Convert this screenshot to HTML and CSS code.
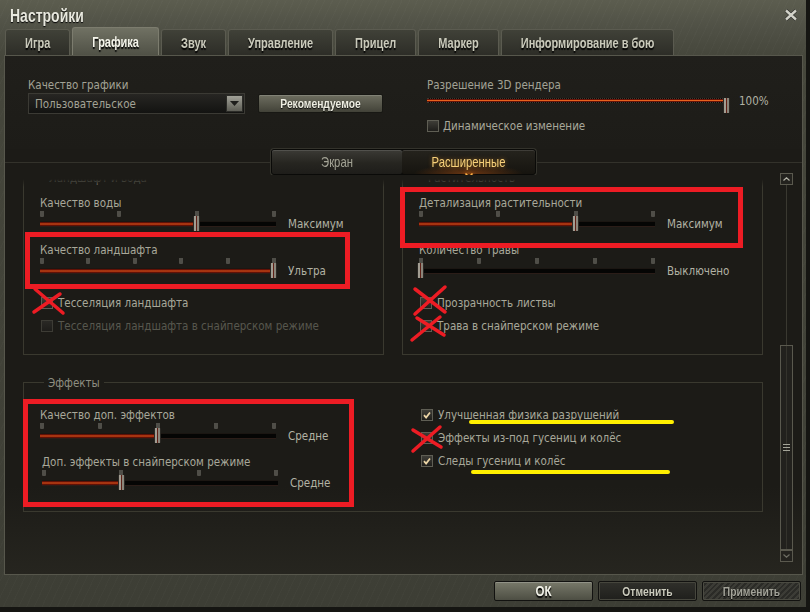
FILE: index.html
```html
<!DOCTYPE html>
<html lang="ru">
<head>
<meta charset="utf-8">
<title>Настройки</title>
<link rel="stylesheet" href="styles.css">
</head>
<body>
<div class="window">
  <div class="titlebar">
    <div class="title"><span class="tall">Настройки</span></div>
    <svg class="close" viewBox="0 0 14 12" width="14" height="12"><path d="M2 1.5L12 10.5M12 1.5L2 10.5" stroke="#202020" stroke-width="3.6"/><path d="M2 1.5L12 10.5M12 1.5L2 10.5" stroke="#d2d2c8" stroke-width="2.4"/></svg>
  </div>

  <div class="tabs">
    <div class="tab"><span class="tall">Игра</span></div>
    <div class="tab active"><span class="tall">Графика</span></div>
    <div class="tab"><span class="tall">Звук</span></div>
    <div class="tab"><span class="tall">Управление</span></div>
    <div class="tab"><span class="tall">Прицел</span></div>
    <div class="tab"><span class="tall">Маркер</span></div>
    <div class="tab"><span class="tall">Информирование в бою</span></div>
  </div>

  <div class="panel">
    <div class="top">
      <div class="top-left">
        <div class="label">Качество графики</div>
        <div class="top-row">
          <div class="select">
            <span>Пользовательское</span>
            <span class="select-btn"><svg width="9" height="5" viewBox="0 0 9 5"><path d="M0 0H9L4.5 5Z" fill="#1e1e1c"/></svg></span>
          </div>
          <div class="btn-rec"><span class="tall">Рекомендуемое</span></div>
        </div>
      </div>
      <div class="top-right">
        <div class="label">Разрешение 3D рендера</div>
        <div class="res-row">
          <div class="res-track">
            <div class="res-rail"><div class="fill" style="width:100%"></div></div>
            <div class="thumb res-thumb" style="left:296px"></div>
          </div>
          <div class="res-value">100%</div>
        </div>
        <div class="check top-check"><span class="cb"></span>Динамическое изменение</div>
      </div>
    </div>

    <div class="subbar">
      <div class="subtabs">
        <div class="subtab"><span class="tall">Экран</span></div>
        <div class="subtab active"><span class="tall">Расширенные</span><svg class="chev" viewBox="0 0 10 7" width="10" height="7"><path d="M1.5 1.5L5 5L8.5 1.5" stroke="#ffb347" stroke-width="1.6" fill="none"/></svg></div>
      </div>
    </div>

    <div class="body">
      <div class="viewport">
        <div class="content">
          <div class="row">
            <div class="group">
              <div class="legend">Ландшафт и вода</div>
              <div class="slider">
                <div class="s-label">Качество воды</div>
                <div class="s-row">
                  <div class="s-wrap">
                    <div class="ticks"><i></i><i></i><i></i><i></i></div>
                    <div class="rail"><div class="fill" style="width:157px"></div></div>
                    <div class="thumb" style="left:153px"></div>
                  </div>
                  <div class="s-value">Максимум</div>
                </div>
              </div>
              <div class="slider">
                <div class="s-label">Качество ландшафта</div>
                <div class="s-row">
                  <div class="s-wrap">
                    <div class="ticks"><i></i><i></i><i></i><i></i><i></i><i></i></div>
                    <div class="rail"><div class="fill" style="width:100%"></div></div>
                    <div class="thumb" style="left:230px"></div>
                  </div>
                  <div class="s-value">Ультра</div>
                </div>
              </div>
              <div class="checks">
                <div class="check"><span class="cb"></span>Тесселяция ландшафта</div>
                <div class="check disabled"><span class="cb"></span>Тесселяция ландшафта в снайперском режиме</div>
              </div>
            </div>

            <div class="group">
              <div class="legend">Растительность</div>
              <div class="slider">
                <div class="s-label">Детализация растительности</div>
                <div class="s-row">
                  <div class="s-wrap">
                    <div class="ticks"><i></i><i></i><i></i><i></i></div>
                    <div class="rail"><div class="fill" style="width:157px"></div></div>
                    <div class="thumb" style="left:153px"></div>
                  </div>
                  <div class="s-value">Максимум</div>
                </div>
              </div>
              <div class="slider">
                <div class="s-label">Количество травы</div>
                <div class="s-row">
                  <div class="s-wrap">
                    <div class="ticks"><i></i><i></i><i></i><i></i><i></i></div>
                    <div class="rail"><div class="fill" style="width:0"></div></div>
                    <div class="thumb" style="left:-2px"></div>
                  </div>
                  <div class="s-value">Выключено</div>
                </div>
              </div>
              <div class="checks">
                <div class="check"><span class="cb"></span>Прозрачность листвы</div>
                <div class="check"><span class="cb"></span>Трава в снайперском режиме</div>
              </div>
            </div>
          </div>

          <div class="group effects">
            <div class="legend">Эффекты</div>
            <div class="col-a">
              <div class="slider">
                <div class="s-label">Качество доп. эффектов</div>
                <div class="s-row">
                  <div class="s-wrap">
                    <div class="ticks"><i></i><i></i><i></i><i></i><i></i></div>
                    <div class="rail"><div class="fill" style="width:118px"></div></div>
                    <div class="thumb" style="left:114px"></div>
                  </div>
                  <div class="s-value">Средне</div>
                </div>
              </div>
              <div class="slider shift">
                <div class="s-label">Доп. эффекты в снайперском режиме</div>
                <div class="s-row">
                  <div class="s-wrap">
                    <div class="ticks"><i></i><i></i><i></i><i></i></div>
                    <div class="rail"><div class="fill" style="width:79px"></div></div>
                    <div class="thumb" style="left:76px"></div>
                  </div>
                  <div class="s-value">Средне</div>
                </div>
              </div>
            </div>
            <div class="col-b">
              <div class="check"><span class="cb on"><svg width="8" height="8" viewBox="0 0 8 8"><path d="M1 4.2L3.1 6.5L7 1.5" fill="none" stroke="#ecd5a6" stroke-width="1.8"/></svg></span>Улучшенная физика разрушений</div>
              <div class="check"><span class="cb"></span>Эффекты из-под гусениц и колёс</div>
              <div class="check"><span class="cb on"><svg width="8" height="8" viewBox="0 0 8 8"><path d="M1 4.2L3.1 6.5L7 1.5" fill="none" stroke="#ecd5a6" stroke-width="1.8"/></svg></span>Следы гусениц и колёс</div>
            </div>
          </div>
        </div>
      </div>

      <div class="scrollbar">
        <div class="sb-btn"><svg width="7" height="4" viewBox="0 0 7 4"><path d="M0.5 3.5L3.5 0.8L6.5 3.5" stroke="#b4b4a8" fill="none" stroke-width="1.2"/></svg></div>
        <div class="sb-track"></div>
        <div class="sb-thumb"><svg width="7" height="7" viewBox="0 0 7 7"><path d="M0 0.5H7M0 3.5H7M0 6.5H7" stroke="#a4a498"/></svg></div>
        <div class="sb-btn"><svg width="7" height="4" viewBox="0 0 7 4"><path d="M0.5 0.5L3.5 3.2L6.5 0.5" stroke="#6e6e64" fill="none" stroke-width="1.2"/></svg></div>
      </div>
    </div>
  </div>

  <div class="footer">
    <div class="btn ok"><span class="tall">ОК</span></div>
    <div class="btn cancel"><span class="tall">Отменить</span></div>
    <div class="btn apply"><span class="tall">Применить</span></div>
  </div>

  <svg class="annot" width="810" height="612" viewBox="0 0 810 612">
    <g fill="none" stroke="#ed1c24" stroke-width="5">
      <rect x="27.5" y="234.5" width="320" height="52"/>
      <rect x="402.5" y="189.5" width="338" height="56"/>
      <rect x="25.5" y="401.5" width="326" height="103"/>
    </g>
    <g stroke="#ed1c24" stroke-width="3.5" stroke-linecap="round">
      <path d="M35 289L63 313M60 294L34 312"/>
      <path d="M415 289L445 312M445 287L415 314"/>
      <path d="M417 318L444 335M440 317L412 340"/>
      <path d="M413 430L441 447M440 427L413 451"/>
    </g>
    <g stroke="#ffef00" stroke-width="4" stroke-linecap="round">
      <path d="M471 422H672"/>
      <path d="M473 472H668"/>
    </g>
  </svg>
</div>
</body>
</html>
```

FILE: styles.css
```css
body {
  margin: 0;
  background: #141411;
  font-family: "DejaVu Sans Condensed", "DejaVu Sans", sans-serif;
  font-size: 11.5px;
  color: #a8a89a;
}

.tall {
  display: inline-block;
  transform: scaleY(1.3);
}

.window {
  position: relative;
  width: 810px;
  height: 612px;
  box-sizing: border-box;
  border-right: 4px solid #151512;
  border-bottom: 5px solid #151512;
  background:
    repeating-linear-gradient(115deg, rgba(255,255,255,0.015) 0 1px, rgba(0,0,0,0) 1px 7px),
    linear-gradient(180deg, #5c5d4f 0, #505146 27px, #46473c 55px, #3d3e35 100%);
  display: flex;
  flex-direction: column;
  overflow: hidden;
}

.titlebar {
  height: 27px;
  box-sizing: border-box;
  padding: 2px 8px 0 10px;
  display: flex;
  align-items: center;
  justify-content: space-between;
  flex: none;
}

.title {
  font-family: "Liberation Sans", Arial, sans-serif;
  font-weight: bold;
  font-size: 14px;
  line-height: 20px;
  color: #e8e8de;
  text-shadow: 0 1px 1px #000;
}

.close { display: block; }

.tabs {
  height: 28px;
  display: flex;
  align-items: flex-end;
  gap: 2px;
  padding-left: 5px;
  flex: none;
}

.tab {
  height: 26px;
  box-sizing: border-box;
  padding: 0 19px;
  display: flex;
  align-items: center;
  justify-content: center;
  font-family: "Liberation Sans", Arial, sans-serif;
  font-weight: bold;
  font-size: 11px;
  color: #cacabb;
  background: linear-gradient(#404138, #2d2d27);
  border: 1px solid #5b5b50;
  border-bottom: none;
  border-radius: 3px 3px 0 0;
  text-shadow: 0 1px 1px #000;
  white-space: nowrap;
}

.tab .tall { transform: scaleY(1.35); }

.tab.active {
  height: 28px;
  color: #f5f5eb;
  background: linear-gradient(#707163, #505146);
  border-color: #7c7c6e;
}

.panel {
  margin-left: 4px;
  width: 799px;
  height: 520px;
  flex: none;
  box-sizing: border-box;
  border: 1px solid #57574c;
  background: #1c1b17;
  display: flex;
  flex-direction: column;
}

.top {
  height: 93px;
  flex: none;
  display: flex;
  background: linear-gradient(#201f1b, #1d1c18);
}

.top-left {
  width: 399px;
  padding: 22px 0 0 23px;
}

.top-right {
  padding-top: 22px;
}

.label {
  height: 14px;
  line-height: 14px;
  white-space: nowrap;
  color: #a2a295;
}

.top-row {
  display: flex;
  margin-top: 1px;
}

.select {
  width: 217px;
  height: 21px;
  box-sizing: border-box;
  border: 1px solid #3b3a34;
  background: linear-gradient(#272623, #131311);
  display: flex;
  align-items: center;
  justify-content: space-between;
  padding-left: 6px;
  color: #a3a396;
}

.select-btn {
  width: 17px;
  height: 17px;
  margin-right: 1px;
  box-sizing: border-box;
  border: 1px solid #2c2c28;
  background: linear-gradient(#a2a298, #5e5e56);
  display: flex;
  align-items: center;
  justify-content: center;
}

.btn-rec {
  margin: 1px 0 0 13px;
  width: 125px;
  height: 19px;
  box-sizing: border-box;
  border: 1px solid #181814;
  border-radius: 2px;
  background: linear-gradient(#6e6e60, #424238);
  box-shadow: inset 0 1px 0 rgba(255,255,255,0.15);
  font-family: "Liberation Sans", Arial, sans-serif;
  font-weight: bold;
  font-size: 10.3px;
  color: #eeeee2;
  text-shadow: 0 1px 1px #000;
  display: flex;
  align-items: center;
  justify-content: center;
}

.btn-rec .tall { transform: scaleY(1.2); }

.res-row {
  display: flex;
  align-items: center;
  height: 16px;
  margin-top: 1px;
}

.res-track {
  position: relative;
  width: 300px;
  height: 16px;
}

.res-rail {
  margin-top: 5px;
  width: 298px;
  height: 3px;
  background: #0a0908;
  border-top: 1px dotted #3a3932;
  border-bottom: 1px dotted #3a3932;
}

.res-thumb {
  top: 1px;
  width: 8px;
  height: 14px;
}

.res-value {
  margin-left: 12px;
  color: #b1b1a3;
}

.check {
  display: flex;
  align-items: center;
  gap: 5px;
  height: 16px;
  line-height: 14px;
  padding-left: 1px;
  white-space: nowrap;
  color: #a8a89a;
}

.top-check {
  margin-top: 9px;
  gap: 4px;
  padding-left: 0;
}

.cb {
  width: 12px;
  height: 12px;
  box-sizing: border-box;
  flex: none;
  border: 1px solid #5f5e54;
  background: linear-gradient(#3e3d37, #1f1e1b);
  display: flex;
  align-items: center;
  justify-content: center;
}

.check.disabled { color: #57574e; }
.check.disabled .cb {
  border-color: #3d3c35;
  background: linear-gradient(#2a2925, #1e1d1a);
}

.subbar {
  height: 26px;
  flex: none;
  display: flex;
  align-items: center;
}

.subbar::before,
.subbar::after {
  content: "";
  flex: 1;
  height: 1px;
  background: #33322b;
}

.subtabs {
  display: flex;
  height: 26px;
  box-sizing: border-box;
  border: 1px solid #0a0a08;
  border-radius: 3px;
  background: #0a0a08;
  box-shadow: 0 0 0 1px #34332c;
}

.subtab {
  width: 130px;
  display: flex;
  align-items: center;
  justify-content: center;
  font-family: "Liberation Sans", Arial, sans-serif;
  font-size: 11.3px;
  color: #a3a395;
  background: linear-gradient(#3b3a35, #262520 55%, #1e1d1a);
  box-shadow: inset 0 1px 0 rgba(255,255,255,0.12);
  border-radius: 2px;
}

.subtab .tall { transform: scaleY(1.22); }

.subtab.active {
  position: relative;
  width: 133px;
  color: #f6d07a;
  background:
    radial-gradient(ellipse 55% 55% at 50% 100%, rgba(210,95,20,0.45), rgba(0,0,0,0) 75%),
    linear-gradient(#25231d, #16140f);
  text-shadow: 0 0 4px rgba(240,150,40,0.6);
}

.chev {
  position: absolute;
  left: 50%;
  bottom: -5px;
  margin-left: -5px;
  filter: drop-shadow(0 0 2px rgba(255,120,20,0.9));
}

.body {
  flex: 1;
  min-height: 0;
  display: flex;
  background: linear-gradient(#1c1b17 0, #1c1b17 78%, #26251f 100%);
}

.viewport {
  position: relative;
  flex: 1;
  overflow: hidden;
}

.viewport::before {
  content: "";
  position: absolute;
  left: 0;
  right: 0;
  top: 0;
  height: 12px;
  background: linear-gradient(#1c1b17 35%, rgba(28,27,23,0));
  z-index: 2;
}

.content {
  padding: 3px 0 0 18px;
}

.row {
  display: flex;
  gap: 18px;
}

.group {
  position: relative;
  width: 361px;
  box-sizing: border-box;
  border: 1px solid #3a392f;
  padding: 17px 0 20px 16px;
}

.legend {
  position: absolute;
  top: -8px;
  left: 21px;
  padding: 0 4px;
  line-height: 14px;
  background: #1c1b17;
  color: #8e8e81;
}

.slider + .slider { margin-top: 12px; }
.slider.shift { margin-left: 2px; }

.s-label {
  height: 14px;
  line-height: 14px;
  white-space: nowrap;
}

.s-row {
  display: flex;
  margin-top: 1px;
}

.s-wrap {
  position: relative;
  width: 236px;
  height: 20px;
  flex: none;
}

.ticks {
  display: flex;
  justify-content: space-between;
  height: 6px;
}

.ticks i {
  width: 4px;
  height: 6px;
  background: #4f4e48;
  border-radius: 0 0 1px 1px;
}

.rail {
  margin-top: 5px;
  height: 4px;
  background: #050504;
  box-shadow: 0 1px 0 #2b1d18, 0 -1px 0 #1b1612;
}

.fill {
  height: 100%;
  background: linear-gradient(#4a0c05, #7e1808 30%, #e8621e 50%, #7e1808 70%, #4a0c05);
}

.thumb {
  position: absolute;
  top: 5px;
  width: 7px;
  height: 15px;
  border-radius: 1px;
  background: linear-gradient(90deg, #2a2824 0 1px, #a29d92 1px 3px, #5e2016 3px 4px, #8a857a 4px 6px, #2a2824 6px);
}

.s-value {
  margin: 6px 0 0 12px;
  line-height: 14px;
  white-space: nowrap;
  color: #b2b2a4;
}

.checks {
  margin-top: 17px;
  display: flex;
  flex-direction: column;
  gap: 7px;
}

.effects {
  width: 740px;
  margin-top: 27px;
  padding: 24px 0 21px 0;
  display: flex;
}

.effects .legend { left: 20px; top: -7px; }

.col-a {
  width: 379px;
  box-sizing: border-box;
  padding: 1px 0 0 16px;
}

.col-b {
  display: flex;
  flex-direction: column;
  gap: 7px;
  padding-left: 17px;
}

.scrollbar {
  width: 13px;
  margin: -2px 9px 12px 0;
  display: flex;
  flex-direction: column;
  flex: none;
}

.sb-btn {
  height: 12px;
  flex: none;
  box-sizing: border-box;
  border: 1px solid #5a594e;
  background: #23221e;
  display: flex;
  align-items: center;
  justify-content: center;
}

.sb-track {
  flex: 1;
  background: linear-gradient(90deg, rgba(0,0,0,0) 6px, #3a3931 6px 7px, rgba(0,0,0,0) 7px);
}

.sb-thumb {
  height: 205px;
  flex: none;
  box-sizing: border-box;
  border: 1px solid #5a594e;
  background: linear-gradient(90deg, #22211d 5px, #34332c 5px 6px, #22211d 6px);
  display: flex;
  align-items: center;
  justify-content: center;
}

.footer {
  flex: 1;
  display: flex;
  justify-content: flex-end;
  gap: 5px;
  padding: 6px 5px 0 0;
}

.btn {
  width: 99px;
  height: 20px;
  box-sizing: border-box;
  border: 1px solid #121210;
  border-radius: 2px;
  font-family: "Liberation Sans", Arial, sans-serif;
  font-weight: bold;
  font-size: 10.3px;
  text-shadow: 0 1px 1px #000;
  display: flex;
  align-items: center;
  justify-content: center;
}

.btn .tall { transform: scaleY(1.28); }

.btn.ok {
  font-size: 11px;
  color: #f2f2e8;
  background: linear-gradient(#78796a, #4d4e43);
  box-shadow: inset 0 1px 0 rgba(255,255,255,0.2);
}

.btn.ok .tall { transform: scaleY(1.3) scaleX(1.05); }

.btn.cancel {
  color: #cbcbbd;
  background: linear-gradient(#30302b, #1f1f1c);
  box-shadow: inset 0 0 0 1px #46463d;
}

.btn.apply {
  color: #a3a399;
  background: repeating-linear-gradient(135deg, #3c3c36 0 2px, #2b2b27 2px 4px);
  box-shadow: inset 0 0 0 1px #4b4b42;
}

.annot {
  position: absolute;
  left: 0;
  top: 0;
  pointer-events: none;
  z-index: 5;
}
```
